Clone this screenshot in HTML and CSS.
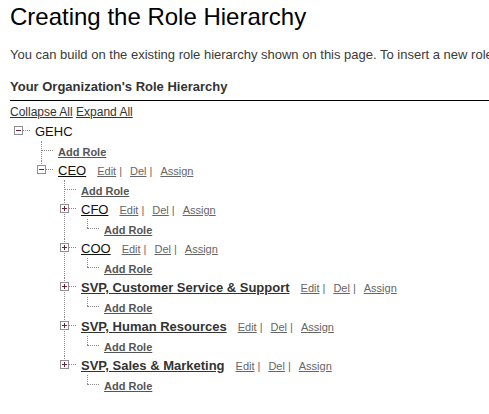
FILE: index.html
```html
<!DOCTYPE html>
<html lang="en">
<head>
<meta charset="utf-8">
<title>Creating the Role Hierarchy</title>
<link rel="stylesheet" href="styles.css">
</head>
<body>
<div class="page">
  <h1 class="title">Creating the Role Hierarchy</h1>
  <p class="intro">You can build on the existing role hierarchy shown on this page. To insert a new role, click Add Role.</p>
  <h2 class="section">Your Organization's Role Hierarchy</h2>
  <div class="toggles"><a class="toggle">Collapse All</a> <a class="toggle">Expand All</a></div>

  <ul class="tree root">
    <li class="node">
      <div class="row">
        <svg class="box" width="9" height="9" viewBox="0 0 9 9"><rect x="0.5" y="0.5" width="8" height="8" fill="#fff" stroke="#8f8f8f"/><path d="M2 4.5H7" stroke="#6b1f3c"/></svg>
        <span class="root-name">GEHC</span>
      </div>
      <ul class="tree">
        <li class="leaf"><div class="row add"><a class="add-link">Add Role</a></div></li>
        <li class="node">
          <div class="row">
            <svg class="box" width="9" height="9" viewBox="0 0 9 9"><rect x="0.5" y="0.5" width="8" height="8" fill="#fff" stroke="#8f8f8f"/><path d="M2 4.5H7" stroke="#6b1f3c"/></svg>
            <a class="name">CEO</a><span class="actions"><a class="act">Edit</a><span class="sep">|</span><a class="act">Del</a><span class="sep">|</span><a class="act">Assign</a></span>
          </div>
          <ul class="tree">
            <li class="leaf"><div class="row add"><a class="add-link">Add Role</a></div></li>
            <li class="node">
              <div class="row">
                <svg class="box" width="9" height="9" viewBox="0 0 9 9"><rect x="0.5" y="0.5" width="8" height="8" fill="#fff" stroke="#8f8f8f"/><path d="M2 4.5H7M4.5 2V7" stroke="#6b1f3c"/></svg>
                <a class="name">CFO</a><span class="actions"><a class="act">Edit</a><span class="sep">|</span><a class="act">Del</a><span class="sep">|</span><a class="act">Assign</a></span>
              </div>
              <ul class="tree">
                <li class="leaf"><div class="row add"><a class="add-link">Add Role</a></div></li>
              </ul>
            </li>
            <li class="node">
              <div class="row">
                <svg class="box" width="9" height="9" viewBox="0 0 9 9"><rect x="0.5" y="0.5" width="8" height="8" fill="#fff" stroke="#8f8f8f"/><path d="M2 4.5H7M4.5 2V7" stroke="#6b1f3c"/></svg>
                <a class="name">COO</a><span class="actions"><a class="act">Edit</a><span class="sep">|</span><a class="act">Del</a><span class="sep">|</span><a class="act">Assign</a></span>
              </div>
              <ul class="tree">
                <li class="leaf"><div class="row add"><a class="add-link">Add Role</a></div></li>
              </ul>
            </li>
            <li class="node">
              <div class="row">
                <svg class="box" width="9" height="9" viewBox="0 0 9 9"><rect x="0.5" y="0.5" width="8" height="8" fill="#fff" stroke="#8f8f8f"/><path d="M2 4.5H7M4.5 2V7" stroke="#6b1f3c"/></svg>
                <a class="name strong">SVP, Customer Service &amp; Support</a><span class="actions"><a class="act">Edit</a><span class="sep">|</span><a class="act">Del</a><span class="sep">|</span><a class="act">Assign</a></span>
              </div>
              <ul class="tree">
                <li class="leaf"><div class="row add"><a class="add-link">Add Role</a></div></li>
              </ul>
            </li>
            <li class="node">
              <div class="row">
                <svg class="box" width="9" height="9" viewBox="0 0 9 9"><rect x="0.5" y="0.5" width="8" height="8" fill="#fff" stroke="#8f8f8f"/><path d="M2 4.5H7M4.5 2V7" stroke="#6b1f3c"/></svg>
                <a class="name strong">SVP, Human Resources</a><span class="actions"><a class="act">Edit</a><span class="sep">|</span><a class="act">Del</a><span class="sep">|</span><a class="act">Assign</a></span>
              </div>
              <ul class="tree">
                <li class="leaf"><div class="row add"><a class="add-link">Add Role</a></div></li>
              </ul>
            </li>
            <li class="node">
              <div class="row">
                <svg class="box" width="9" height="9" viewBox="0 0 9 9"><rect x="0.5" y="0.5" width="8" height="8" fill="#fff" stroke="#8f8f8f"/><path d="M2 4.5H7M4.5 2V7" stroke="#6b1f3c"/></svg>
                <a class="name strong">SVP, Sales &amp; Marketing</a><span class="actions"><a class="act">Edit</a><span class="sep">|</span><a class="act">Del</a><span class="sep">|</span><a class="act">Assign</a></span>
              </div>
              <ul class="tree">
                <li class="leaf"><div class="row add"><a class="add-link">Add Role</a></div></li>
              </ul>
            </li>
          </ul>
        </li>
      </ul>
    </li>
  </ul>
</div>
</body>
</html>
```

FILE: styles.css
```css
html, body {
  margin: 0;
  padding: 0;
  background: #fff;
  overflow: hidden;
}

body {
  font-family: "Liberation Sans", Arial, sans-serif;
  color: #333;
}

.page {
  padding-left: 10px;
}

.title {
  margin: 3px 0 0;
  font-size: 24px;
  line-height: 28px;
  font-weight: normal;
  color: #000;
}

.intro {
  margin: 16px 0 0;
  font-size: 13px;
  line-height: 15px;
  color: #3a3a3a;
  white-space: nowrap;
}

.section {
  margin: 17px 0 0;
  padding-bottom: 5px;
  font-size: 13px;
  line-height: 16px;
  font-weight: bold;
  color: #333;
  border-bottom: 1px solid #000;
}

.toggles {
  margin-top: 4px;
  font-size: 12px;
  line-height: 14px;
}

.toggle {
  color: #333;
  text-decoration: underline;
}

.tree {
  list-style: none;
  margin: 0;
  padding: 0;
}

.tree.root {
  margin-top: 3px;
  margin-left: 4px;
}

.tree .tree {
  padding-left: 23px;
}

.tree li {
  position: relative;
}

.tree .tree > li::before {
  content: "";
  position: absolute;
  left: 4px;
  top: 0;
  bottom: 0;
  border-left: 1px dotted #8a8a8a;
}

.tree .tree > li:last-child::before {
  bottom: auto;
  height: 9px;
}

.row {
  position: relative;
  height: 19px;
  line-height: 19px;
  padding-left: 21px;
  font-size: 13px;
  white-space: nowrap;
}

.row::before {
  content: "";
  position: absolute;
  left: 9px;
  width: 7px;
  top: 8px;
  border-top: 1px dotted #8a8a8a;
}

.row.add {
  height: 19px;
  padding-top: 1px;
}

.row.add::before {
  left: 4px;
  width: 12px;
  top: 9px;
}

.box {
  position: absolute;
  left: 0;
  top: 4px;
  display: block;
}

.root-name {
  color: #111;
}

.name {
  color: #111;
  text-decoration: underline;
}

.name.strong {
  font-weight: bold;
  color: #333;
}

.add-link {
  font-size: 11px;
  font-weight: bold;
  color: #555;
  text-decoration: underline;
}

.actions {
  margin-left: 11px;
  font-size: 11px;
  color: #666;
}

.act {
  color: #666;
  text-decoration: underline;
}

.sep {
  padding: 0 8px 0 3px;
}
```
